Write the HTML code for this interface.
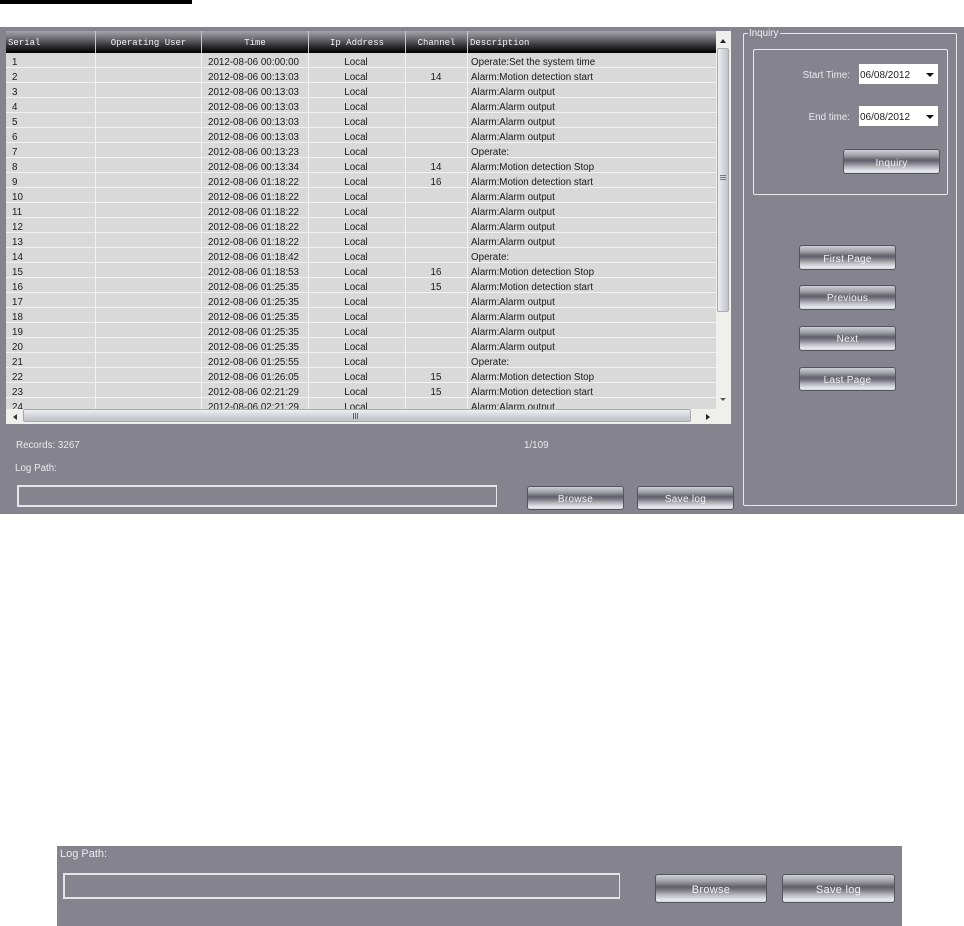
<!DOCTYPE html>
<html lang="en">
<head>
<meta charset="utf-8">
<title>Log</title>
<style>
html,body{margin:0;padding:0;background:#fff;}
body{width:964px;height:926px;position:relative;overflow:hidden;font-family:"Liberation Sans",sans-serif;}
div,span{position:absolute;box-sizing:border-box;}
.panel{background:#85848e;}
.lbl{color:#e9e9ee;font-size:9.8px;line-height:12px;white-space:nowrap;}
.btn{border:1px solid #55545e;border-radius:3px;background:linear-gradient(#cfcfd6 0%,#a3a3ab 22%,#5f5e69 44%,#7b7a85 56%,#b3b3bb 72%,#e9e9f0 92%,#d2d2da 100%);color:#f0f0f4;font-size:10px;text-align:center;letter-spacing:.3px;white-space:nowrap;}
.input{border:2px solid #e4e4e6;border-right-width:1px;border-bottom-width:2px;}
#table{left:6px;top:31px;width:725px;height:393px;background:#f2f2f0;overflow:hidden;}
#hdr{left:0;top:0;width:710px;height:22px;background:linear-gradient(#a4a4aa 0%,#74747a 30%,#2c2c30 70%,#000 100%);}
.h{top:0;height:22px;border-right:1px solid #c8c8cc;color:#f2f2f2;font:9px/25px "Liberation Mono",monospace;text-align:center;white-space:nowrap;}
#rows{left:0;top:22px;width:710px;height:356px;overflow:hidden;background:#d9d9d9;}
.r{left:0;width:710px;height:15px;border-bottom:1px solid #f1f1f1;background:#d9d9d9;}
.r span{top:2px;color:#1a1a1a;font-size:9.8px;line-height:15px;white-space:nowrap;}
.a{left:6px}.b{left:202px}.c2{left:260px;width:180px;text-align:center}.d{left:465px}
.n{left:400px;width:60px;text-align:center}
.colsep{top:22px;width:1px;height:356px;background:#f1f1f1;}
.combo{background:#fff;color:#222;font-size:10px;line-height:23px;padding-left:1px;white-space:nowrap;}
.combo i{position:absolute;right:4px;top:9px;width:0;height:0;border-left:4px solid transparent;border-right:4px solid transparent;border-top:4px solid #111;}
</style>
</head>
<body>
<div style="left:0;top:0;width:192px;height:4px;background:#000"></div>

<div class="panel" style="left:0;top:27px;width:964px;height:487px"></div>

<div id="table">
  <div id="hdr">
    <div class="h" style="left:0;width:90px;text-align:left;padding-left:2px">Serial</div>
    <div class="h" style="left:90px;width:106px">Operating User</div>
    <div class="h" style="left:196px;width:107px">Time</div>
    <div class="h" style="left:303px;width:97px">Ip Address</div>
    <div class="h" style="left:400px;width:62px">Channel</div>
    <div class="h" style="left:462px;width:248px;text-align:left;padding-left:2px;border-right:0">Description</div>
  </div>
  <div id="rows">
    <div class="r" style="top:0"><span class="a">1</span><span class="b">2012-08-06 00:00:00</span><span class="c2">Local</span><span class="d">Operate:Set the system time</span></div>
    <div class="r" style="top:15px"><span class="a">2</span><span class="b">2012-08-06 00:13:03</span><span class="c2">Local</span><span class="n">14</span><span class="d">Alarm:Motion detection start</span></div>
    <div class="r" style="top:30px"><span class="a">3</span><span class="b">2012-08-06 00:13:03</span><span class="c2">Local</span><span class="d">Alarm:Alarm output</span></div>
    <div class="r" style="top:45px"><span class="a">4</span><span class="b">2012-08-06 00:13:03</span><span class="c2">Local</span><span class="d">Alarm:Alarm output</span></div>
    <div class="r" style="top:60px"><span class="a">5</span><span class="b">2012-08-06 00:13:03</span><span class="c2">Local</span><span class="d">Alarm:Alarm output</span></div>
    <div class="r" style="top:75px"><span class="a">6</span><span class="b">2012-08-06 00:13:03</span><span class="c2">Local</span><span class="d">Alarm:Alarm output</span></div>
    <div class="r" style="top:90px"><span class="a">7</span><span class="b">2012-08-06 00:13:23</span><span class="c2">Local</span><span class="d">Operate:</span></div>
    <div class="r" style="top:105px"><span class="a">8</span><span class="b">2012-08-06 00:13:34</span><span class="c2">Local</span><span class="n">14</span><span class="d">Alarm:Motion detection Stop</span></div>
    <div class="r" style="top:120px"><span class="a">9</span><span class="b">2012-08-06 01:18:22</span><span class="c2">Local</span><span class="n">16</span><span class="d">Alarm:Motion detection start</span></div>
    <div class="r" style="top:135px"><span class="a">10</span><span class="b">2012-08-06 01:18:22</span><span class="c2">Local</span><span class="d">Alarm:Alarm output</span></div>
    <div class="r" style="top:150px"><span class="a">11</span><span class="b">2012-08-06 01:18:22</span><span class="c2">Local</span><span class="d">Alarm:Alarm output</span></div>
    <div class="r" style="top:165px"><span class="a">12</span><span class="b">2012-08-06 01:18:22</span><span class="c2">Local</span><span class="d">Alarm:Alarm output</span></div>
    <div class="r" style="top:180px"><span class="a">13</span><span class="b">2012-08-06 01:18:22</span><span class="c2">Local</span><span class="d">Alarm:Alarm output</span></div>
    <div class="r" style="top:195px"><span class="a">14</span><span class="b">2012-08-06 01:18:42</span><span class="c2">Local</span><span class="d">Operate:</span></div>
    <div class="r" style="top:210px"><span class="a">15</span><span class="b">2012-08-06 01:18:53</span><span class="c2">Local</span><span class="n">16</span><span class="d">Alarm:Motion detection Stop</span></div>
    <div class="r" style="top:225px"><span class="a">16</span><span class="b">2012-08-06 01:25:35</span><span class="c2">Local</span><span class="n">15</span><span class="d">Alarm:Motion detection start</span></div>
    <div class="r" style="top:240px"><span class="a">17</span><span class="b">2012-08-06 01:25:35</span><span class="c2">Local</span><span class="d">Alarm:Alarm output</span></div>
    <div class="r" style="top:255px"><span class="a">18</span><span class="b">2012-08-06 01:25:35</span><span class="c2">Local</span><span class="d">Alarm:Alarm output</span></div>
    <div class="r" style="top:270px"><span class="a">19</span><span class="b">2012-08-06 01:25:35</span><span class="c2">Local</span><span class="d">Alarm:Alarm output</span></div>
    <div class="r" style="top:285px"><span class="a">20</span><span class="b">2012-08-06 01:25:35</span><span class="c2">Local</span><span class="d">Alarm:Alarm output</span></div>
    <div class="r" style="top:300px"><span class="a">21</span><span class="b">2012-08-06 01:25:55</span><span class="c2">Local</span><span class="d">Operate:</span></div>
    <div class="r" style="top:315px"><span class="a">22</span><span class="b">2012-08-06 01:26:05</span><span class="c2">Local</span><span class="n">15</span><span class="d">Alarm:Motion detection Stop</span></div>
    <div class="r" style="top:330px"><span class="a">23</span><span class="b">2012-08-06 02:21:29</span><span class="c2">Local</span><span class="n">15</span><span class="d">Alarm:Motion detection start</span></div>
    <div class="r" style="top:345px"><span class="a">24</span><span class="b">2012-08-06 02:21:29</span><span class="c2">Local</span><span class="d">Alarm:Alarm output</span></div>
  </div>
  <div class="colsep" style="left:89px"></div>
  <div class="colsep" style="left:195px"></div>
  <div class="colsep" style="left:302px"></div>
  <div class="colsep" style="left:399px"></div>
  <div class="colsep" style="left:461px"></div>

  <!-- vertical scrollbar -->
  <div style="left:710px;top:0;width:15px;height:393px;background:#efefec"></div>
  <div style="left:711px;top:17px;width:12px;height:264px;border:1px solid #a9a9ad;border-radius:2px;background:linear-gradient(90deg,#eceef2,#d6d8de 50%,#c0c2c8)"></div>
  <div style="left:714px;top:144px;width:6px;height:1px;background:#777"></div>
  <div style="left:714px;top:146px;width:6px;height:1px;background:#777"></div>
  <div style="left:714px;top:148px;width:6px;height:1px;background:#777"></div>
  <div style="left:714px;top:8px;width:0;height:0;border-left:3px solid transparent;border-right:3px solid transparent;border-bottom:4px solid #222"></div>
  <div style="left:714px;top:367px;width:0;height:0;border-left:3px solid transparent;border-right:3px solid transparent;border-top:3px solid #555"></div>

  <!-- horizontal scrollbar -->
  <div style="left:0;top:378px;width:725px;height:15px;background:#efefec"></div>
  <div style="left:17px;top:378px;width:668px;height:13px;border:1px solid #a9a9ad;border-radius:2px;background:linear-gradient(#eef0f3,#d4d6dc 50%,#bfc1c7)"></div>
  <div style="left:347px;top:382px;width:1px;height:6px;background:#666"></div>
  <div style="left:349px;top:382px;width:1px;height:6px;background:#666"></div>
  <div style="left:351px;top:382px;width:1px;height:6px;background:#666"></div>
  <div style="left:7px;top:383px;width:0;height:0;border-top:3px solid transparent;border-bottom:3px solid transparent;border-right:4px solid #333"></div>
  <div style="left:700px;top:383px;width:0;height:0;border-top:3px solid transparent;border-bottom:3px solid transparent;border-left:4px solid #222"></div>
</div>

<div class="lbl" style="left:16px;top:440px">Records: 3267</div>
<div class="lbl" style="left:524px;top:440px">1/109</div>
<div class="lbl" style="left:15px;top:463px">Log Path:</div>
<div class="input" style="left:17px;top:485px;width:480px;height:22px"></div>
<div class="btn" style="left:527px;top:486px;width:97px;height:24px;line-height:25px">Browse</div>
<div class="btn" style="left:637px;top:486px;width:97px;height:24px;line-height:25px">Save log</div>

<!-- Inquiry group -->
<div style="left:743px;top:33px;width:214px;height:473px;border:1px solid #e8e8ec;border-radius:2px"></div>
<div class="panel lbl" style="left:748px;top:28px;height:12px;padding:0 2px 0 1px;color:#f0f0f4">Inquiry</div>
<div style="left:753px;top:49px;width:195px;height:146px;border:1px solid #e8e8ec;border-radius:2px"></div>
<div class="lbl" style="left:780px;top:70px;width:70px;text-align:right">Start Time:</div>
<div class="combo" style="left:859px;top:64px;width:79px;height:20px">06/08/2012<i></i></div>
<div class="lbl" style="left:780px;top:112px;width:70px;text-align:right">End time:</div>
<div class="combo" style="left:859px;top:106px;width:79px;height:20px">06/08/2012<i></i></div>
<div class="btn" style="left:843px;top:149px;width:97px;height:25px;line-height:28px">Inquiry</div>

<div class="btn" style="left:799px;top:245px;width:97px;height:25px;line-height:27px">First Page</div>
<div class="btn" style="left:799px;top:285px;width:97px;height:25px;line-height:25px">Previous</div>
<div class="btn" style="left:799px;top:326px;width:97px;height:25px;line-height:26px">Next</div>
<div class="btn" style="left:799px;top:367px;width:97px;height:24px;line-height:25px">Last Page</div>

<!-- Bottom crop -->
<div class="panel" style="left:57px;top:846px;width:845px;height:80px"></div>
<div class="lbl" style="left:60px;top:848px;font-size:11px">Log Path:</div>
<div class="input" style="left:63px;top:873px;width:557px;height:26px"></div>
<div class="btn" style="left:655px;top:874px;width:112px;height:29px;line-height:30px;font-size:11px">Browse</div>
<div class="btn" style="left:782px;top:874px;width:113px;height:29px;line-height:30px;font-size:11px">Save log</div>
</body>
</html>
